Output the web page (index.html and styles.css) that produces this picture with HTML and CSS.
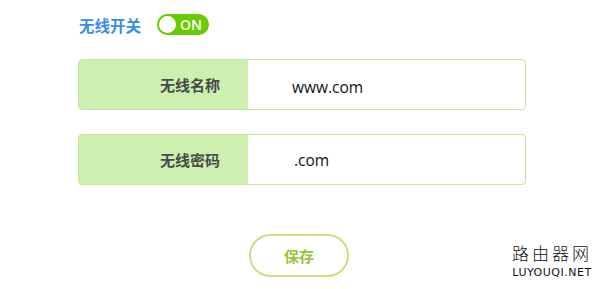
FILE: index.html
```html
<!DOCTYPE html>
<html>
<head>
<meta charset="utf-8">
<link rel="stylesheet" href="styles.css">
</head>
<body>
<div class="page">
  <div class="switch-row">
    <span class="switch-label">无线开关</span>
    <span class="toggle"><span class="knob"></span><span class="on">ON</span></span>
  </div>
  <div class="field first">
    <div class="field-label">无线名称</div>
    <div class="field-value">www.com</div>
  </div>
  <div class="field second">
    <div class="field-label">无线密码</div>
    <div class="field-value pw">.com</div>
  </div>
  <div class="actions">
    <button class="save">保存</button>
  </div>
</div>
<div class="watermark">
  <div class="wm-cn">路由器网</div>
  <div class="wm-en">LUYOUQI.NET</div>
</div>
</body>
</html>
```
FILE: styles.css
```css
html, body {
  margin: 0;
  padding: 0;
  background: #fff;
  width: 600px;
  height: 289px;
  overflow: hidden;
  font-family: "Noto Sans CJK SC", "Liberation Sans", sans-serif;
}
.page {
  padding: 14px 0 0 78px;
  width: 448px;
}
.switch-row {
  display: flex;
  align-items: center;
  height: 21px;
  padding-left: 1px;
}
.switch-label {
  color: #3b8fe0;
  font-size: 15.5px;
  font-weight: bold;
  width: 78px;
}
.toggle {
  display: flex;
  align-items: center;
  width: 52px;
  height: 21px;
  border-radius: 11px;
  background: #66cc00;
  box-sizing: border-box;
  padding-left: 2px;
}
.knob {
  width: 17px;
  height: 17px;
  border-radius: 50%;
  background: #fff;
}
.on {
  color: #fff;
  font-family: "Open Sans", "Liberation Sans", sans-serif;
  font-weight: 600;
  font-size: 14px;
  margin-left: 4px;
}
.field {
  display: flex;
  height: 51px;
  border: 1px solid #c5e69a;
  border-radius: 4px;
  overflow: hidden;
  box-sizing: border-box;
}
.field.first { margin-top: 24px; }
.field.second { margin-top: 24px; }
.field-label {
  width: 169px;
  background: #cdf0b0;
  display: flex;
  align-items: center;
  justify-content: flex-end;
  padding-right: 28px;
  box-sizing: border-box;
  font-size: 15px;
  font-weight: bold;
  color: #4a4a4a;
}
.field-value {
  flex: 1;
  display: flex;
  align-items: center;
  padding-left: 44px;
  padding-top: 5px;
  font-family: "Open Sans", "Liberation Sans", sans-serif;
  font-size: 15.5px;
  color: #111;
}
.field-value.pw { padding-left: 46px; padding-top: 1px; }
.actions {
  display: flex;
  padding-left: 171px;
  margin-top: 49px;
}
.save {
  width: 100px;
  height: 43px;
  border: 2px solid #c8e27c;
  border-radius: 22px;
  background: #fff;
  color: #9cc43c;
  font-family: "Noto Sans CJK SC", sans-serif;
  font-size: 15px;
  font-weight: bold;
  padding: 0;
}
.watermark {
  position: absolute;
  left: 511px;
  top: 242px;
  width: 82px;
  text-align: center;
  color: #111;
}
.wm-cn {
  font-family: "Noto Sans CJK SC", sans-serif;
  font-weight: 300;
  font-size: 17px;
  letter-spacing: 3px;
  line-height: 22px;
}
.wm-en {
  font-family: "DejaVu Sans", sans-serif;
  font-size: 11px;
  letter-spacing: 0.5px;
  line-height: 14px;
  margin-top: 2px;
}
```
